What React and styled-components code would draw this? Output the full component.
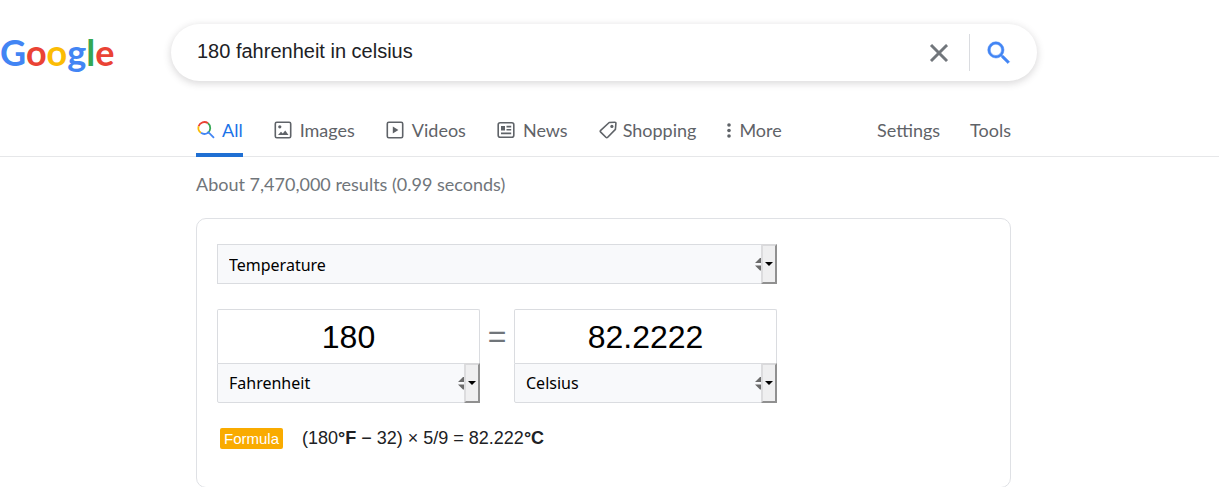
import React, { useState } from "react";
import styled, { createGlobalStyle, css } from "styled-components";

const sans = '"Liberation Sans", Arial, sans-serif';
const display = 'Lato, "Liberation Sans", sans-serif';
const ui = '"Noto Sans", "Open Sans", sans-serif';

const GlobalStyle = createGlobalStyle`
  *, *::before, *::after { box-sizing: border-box; }
  body { margin: 0; background: #fff; color: #202124; font-family: ${sans}; }
`;

const Header = styled.header`
  display: flex;
  align-items: center;
  padding: 24px 182px 0 0;
`;

const Logo = styled.a`
  flex: 0 0 171px;
  height: 57px;
  font: 700 36px/57px ${display};
  text-decoration: none;
`;

const Letter = styled.span`
  color: ${(p) => p.$color};
`;

const SearchBox = styled.form`
  flex: 1;
  max-width: 866px;
  height: 57px;
  display: flex;
  align-items: center;
  padding: 0 23px 0 26px;
  border-radius: 29px;
  background: #fff;
  box-shadow: 0 2px 7px 1px rgba(64, 60, 67, 0.18);
`;

const SearchInput = styled.input`
  flex: 1;
  min-width: 0;
  height: 40px;
  padding: 0 0 2px;
  border: 0;
  outline: 0;
  background: transparent;
  color: #202124;
  font: 20px ${sans};
`;

const IconButton = styled.button`
  display: flex;
  padding: 0;
  border: 0;
  background: transparent;
  color: ${(p) => p.$color};
  cursor: pointer;
`;

const Divider = styled.span`
  width: 1px;
  height: 37px;
  margin: 0 14px 0 15px;
  background: #dadce0;
`;

const NavBar = styled.nav`
  display: flex;
  margin-top: 24px;
  padding: 0 208px 0 196px;
  border-bottom: 1px solid #e6e7e9;
`;

const Tabs = styled.div`
  display: flex;
  gap: 31px;
`;

const Tab = styled.a`
  display: flex;
  align-items: center;
  gap: ${(p) => p.$gap || 6}px;
  height: 52px;
  margin-bottom: -1px;
  padding-top: 1px;
  border-bottom: 4px solid transparent;
  color: #5f6368;
  font: 18px/24px ${display};
  text-decoration: none;
  white-space: nowrap;
  ${(p) =>
    p.$active &&
    css`
      color: #1a73e8;
      border-color: #1f6fd3;
    `}
`;

const Tools = styled.div`
  display: flex;
  gap: 30px;
  margin-left: auto;
`;

const Main = styled.main`
  max-width: 1011px;
  padding-left: 196px;
`;

const Stats = styled.p`
  margin: 15px 0 22px;
  color: #70757a;
  font: 18px/24px ${display};
`;

const Card = styled.section`
  padding: 25px 20px 38px;
  border: 1px solid #dfe1e5;
  border-radius: 10px;
`;

const Converter = styled.div`
  max-width: 560px;
  display: flex;
  flex-direction: column;
  gap: 25px;
`;

const Conversion = styled.div`
  display: flex;
`;

const Quantity = styled.div`
  flex: 1;
  min-width: 0;
`;

const Equals = styled.span`
  width: 34px;
  color: #70757a;
  font: 32px/54px ${sans};
  text-align: center;
`;

const NumberInput = styled.input`
  display: block;
  width: 100%;
  height: 54px;
  padding: 1px 0 0;
  border: 1px solid #dadce0;
  border-bottom: 0;
  border-radius: 2px 2px 0 0;
  outline: 0;
  background: #fff;
  color: #000;
  font: 32px ${sans};
  text-align: center;
`;

const SelectFrame = styled.div`
  position: relative;
  height: 40px;
  border: 1px solid #dadce0;
  border-radius: ${(p) => (p.$attached ? "0 0 2px 2px" : "0")};
  background: #f8f9fb;
`;

const Select = styled.select`
  display: block;
  width: 100%;
  height: 100%;
  padding: ${(p) => (p.$attached ? 0 : 2)}px 30px 0 11px;
  border: 0;
  outline: 0;
  appearance: none;
  background: transparent;
  color: #000;
  font: 16px ${ui};
`;

const DropCap = styled.span`
  position: absolute;
  top: -1px;
  right: -1px;
  bottom: -1px;
  width: 16px;
  display: flex;
  align-items: center;
  justify-content: center;
  border: 2px solid;
  border-color: #d9d9db #909090 #909090 #dcdcde;
  background: #efeff0;
  pointer-events: none;
`;

const Spinner = styled.svg`
  position: absolute;
  top: 12px;
  right: 15px;
  pointer-events: none;
`;

const FormulaRow = styled.div`
  display: flex;
  align-items: center;
  gap: 19px;
  margin: 25px 0 0 3px;
`;

const Badge = styled.span`
  padding: 0 4px;
  border-radius: 2px;
  background: #f9ab00;
  color: #fff;
  font: 15px/21px ${sans};
`;

const Formula = styled.span`
  font: 18px/21px ${sans};
`;

const Glyph = ({ size = 18, children, ...rest }) => (
  <svg width={size} height={size} viewBox="0 0 18 18" fill="none" stroke="currentColor" strokeWidth="1.6" aria-hidden="true" {...rest}>
    {children}
  </svg>
);

const AllIcon = () => (
  <Glyph size={20} viewBox="0 0 20 20" strokeWidth="1.8">
    <path d="M2.6 6.2A6 6 0 0 1 12 3.3" stroke="#ea4335" />
    <path d="M5 12.8A6 6 0 0 1 2.6 6.2" stroke="#fbbc04" />
    <path d="M12 3.3A6 6 0 0 1 11.6 13" stroke="#34a853" />
    <path d="M5 12.8A6 6 0 0 0 11.6 13L12.4 12.2L18 17.8" stroke="#4285f4" />
  </Glyph>
);

const ImagesIcon = () => (
  <Glyph>
    <rect x="1.3" y="1.3" width="15.4" height="15.4" rx="1.5" />
    <circle cx="5.8" cy="5.8" r="1.6" fill="currentColor" stroke="none" />
    <path d="M4 14L7 10.8L8.8 12.4L11.2 9.6L14.5 14Z" fill="currentColor" stroke="none" />
  </Glyph>
);

const VideosIcon = () => (
  <Glyph>
    <rect x="1.3" y="1.3" width="15.4" height="15.4" rx="1.5" />
    <path d="M6.8 5.4L12.4 9L6.8 12.6Z" fill="currentColor" stroke="none" />
  </Glyph>
);

const NewsIcon = () => (
  <Glyph>
    <rect x="1.2" y="1.8" width="15.6" height="14.4" rx="2" />
    <path d="M4 5H8V9.5H4Z" fill="currentColor" stroke="none" />
    <path d="M9.5 5.6H14.2M9.5 8.8H14.2M4 12.4H14.2" />
  </Glyph>
);

const ShoppingIcon = () => (
  <Glyph>
    <path d="M10.2 1.5L15.8 1.2Q17 1.2 16.9 2.4L16.4 8.4L8.7 16.3Q7.8 17.2 6.9 16.3L1.7 11.1Q.8 10.2 1.7 9.3Z" strokeLinejoin="round" />
    <circle cx="12.9" cy="5.4" r="1.6" fill="currentColor" stroke="none" />
  </Glyph>
);

const MoreIcon = () => (
  <svg width="4" height="16" viewBox="0 0 4 16" fill="currentColor" aria-hidden="true">
    <circle cx="2" cy="3" r="1.8" />
    <circle cx="2" cy="8.5" r="1.8" />
    <circle cx="2" cy="14" r="1.8" />
  </svg>
);

const CloseIcon = () => (
  <svg width="30" height="30" viewBox="0 0 24 24" fill="currentColor" stroke="currentColor" strokeWidth="0.4" aria-hidden="true">
    <path d="M19 6.41 17.59 5 12 10.59 6.41 5 5 6.41 10.59 12 5 17.59 6.41 19 12 13.41 17.59 19 19 17.59 13.41 12z" />
  </svg>
);

const SearchIcon = () => (
  <svg width="30" height="30" viewBox="0 0 24 24" fill="currentColor" stroke="currentColor" strokeWidth="0.4" aria-hidden="true">
    <path d="M15.5 14h-.79l-.28-.27A6.47 6.47 0 0 0 16 9.5 6.5 6.5 0 1 0 9.5 16c1.61 0 3.09-.59 4.23-1.57l.27.28v.79l5 4.99L20.49 19l-4.99-5zm-6 0C7.01 14 5 11.99 5 9.5S7.01 5 9.5 5 14 7.01 14 9.5 11.99 14 9.5 14z" />
  </svg>
);

const UnitSelect = ({ label, options, attached, defaultValue }) => (
  <SelectFrame $attached={attached}>
    <Select aria-label={label} defaultValue={defaultValue} $attached={attached}>
      {options.map((o) => (
        <option key={o}>{o}</option>
      ))}
    </Select>
    <Spinner width="6" height="14" viewBox="0 0 6 14" fill="#6b6b6b" aria-hidden="true">
      <path d="M0 6L5 1H6V6ZM0 8.5H6V13.5H5Z" />
    </Spinner>
    <DropCap>
      <svg width="8" height="4" viewBox="0 0 8 4" aria-hidden="true">
        <path d="M0 0H8L4 4Z" />
      </svg>
    </DropCap>
  </SelectFrame>
);

const logoLetters = [
  ["G", "#4285f4"],
  ["o", "#ea4335"],
  ["o", "#fbbc05"],
  ["g", "#4285f4"],
  ["l", "#34a853"],
  ["e", "#ea4335"],
];

const tabs = [
  { name: "All", Icon: AllIcon, active: true },
  { name: "Images", Icon: ImagesIcon, gap: 8 },
  { name: "Videos", Icon: VideosIcon, gap: 8 },
  { name: "News", Icon: NewsIcon, gap: 8 },
  { name: "Shopping", Icon: ShoppingIcon },
  { name: "More", Icon: MoreIcon, gap: 8 },
];

const temperatures = ["Fahrenheit", "Celsius", "Kelvin"];

export default function App() {
  const [query, setQuery] = useState("180 fahrenheit in celsius");

  return (
    <>
      <GlobalStyle />
      <Header>
        <Logo href="#" aria-label="Google">
          {logoLetters.map(([letter, color], i) => (
            <Letter key={i} $color={color}>{letter}</Letter>
          ))}
        </Logo>
        <SearchBox role="search" onSubmit={(e) => e.preventDefault()}>
          <SearchInput aria-label="Search" value={query} onChange={(e) => setQuery(e.target.value)} />
          <IconButton type="button" aria-label="Clear" $color="#70757a" onClick={() => setQuery("")}>
            <CloseIcon />
          </IconButton>
          <Divider />
          <IconButton type="submit" aria-label="Search" $color="#4285f4">
            <SearchIcon />
          </IconButton>
        </SearchBox>
      </Header>
      <NavBar>
        <Tabs>
          {tabs.map(({ name, Icon, active, gap }) => (
            <Tab key={name} href="#" $active={active} $gap={gap}>
              <Icon />
              {name}
            </Tab>
          ))}
        </Tabs>
        <Tools>
          <Tab href="#">Settings</Tab>
          <Tab href="#">Tools</Tab>
        </Tools>
      </NavBar>
      <Main>
        <Stats>About 7,470,000 results (0.99 seconds)</Stats>
        <Card>
          <Converter>
            <UnitSelect label="Quantity" options={["Temperature", "Length", "Mass"]} />
            <Conversion>
              <Quantity>
                <NumberInput aria-label="From value" defaultValue="180" />
                <UnitSelect label="From unit" options={temperatures} defaultValue="Fahrenheit" attached />
              </Quantity>
              <Equals>=</Equals>
              <Quantity>
                <NumberInput aria-label="To value" defaultValue="82.2222" />
                <UnitSelect label="To unit" options={temperatures} defaultValue="Celsius" attached />
              </Quantity>
            </Conversion>
          </Converter>
          <FormulaRow>
            <Badge>Formula</Badge>
            <Formula>
              (180<b>°F</b> − 32) × 5/9 = 82.222<b>°C</b>
            </Formula>
          </FormulaRow>
        </Card>
      </Main>
    </>
  );
}
